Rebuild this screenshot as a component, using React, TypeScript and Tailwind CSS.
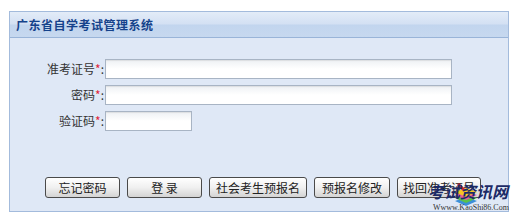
import React from "react";

const font = { fontFamily: '"Noto Sans CJK SC", "Noto Sans", sans-serif' };

function Field({ label, width }: { label: string; width: string }) {
  return (
    <div className="flex items-center h-[20px]">
      <div className="w-[95px] text-right text-[12px] leading-[20px] text-[#333] pr-[1px]">
        {label}
        <span className="text-[#e0263b]">*</span>:
      </div>
      <div
        className={`${width} h-[20px] border border-[#a8b4c4] bg-gradient-to-b from-[#eef1f4] via-white to-white shadow-[inset_0_1px_1px_rgba(0,0,0,0.08)]`}
      />
    </div>
  );
}

function Btn({ label, w }: { label: string; w: string }) {
  return (
    <div
      className={`${w} h-[21px] rounded-[3px] border border-[#4a4a4a] bg-gradient-to-b from-white via-[#f0f0f0] to-[#d4d4d4] text-[12px] leading-[19px] text-[#222] text-center whitespace-nowrap`}
    >
      {label}
    </div>
  );
}

export default function App() {
  return (
    <div className="relative w-[516px] h-[219px] bg-white pt-[11px] pl-[9px]" style={font}>
      <div className="w-[500px] h-[201px] border border-[#a3bbdc] bg-[#dfe8f6] flex flex-col">
        <div className="h-[26px] border-b border-[#99b4d8] bg-[linear-gradient(to_bottom,#e3ecf8_0%,#d3e0f3_48%,#c2d5ee_52%,#c6d8ef_100%)] pl-[6px] flex items-center">
          <span className="text-[12px] font-bold text-[#15428b] tracking-[0.5px]">广东省自学考试管理系统</span>
        </div>
        <div className="flex flex-col gap-[6px] pt-[21px]">
          <Field label="准考证号" width="w-[347px]" />
          <Field label="密码" width="w-[347px]" />
          <Field label="验证码" width="w-[87px]" />
        </div>
        <div className="flex gap-[7px] pl-[35px] mt-[46px]">
          <Btn label="忘记密码" w="w-[75px]" />
          <Btn label="登 录" w="w-[75px]" />
          <Btn label="社会考生预报名" w="w-[98px]" />
          <Btn label="预报名修改" w="w-[76px]" />
          <Btn label="找回准考证号" w="w-[84px]" />
        </div>
      </div>
      <svg className="absolute left-[452px] top-[181px]" width="28" height="28" viewBox="0 0 28 28">
        <path d="M3 20 L14 16 L25 20 L14 25 Z" fill="#3b8fd8" />
        <path d="M3 17 L14 13 L25 17 L14 22 Z" fill="#5cc24a" />
        <path d="M3 14 L14 10 L25 14 L14 19 Z" fill="#e85a9a" />
        <path d="M3 11 L14 7 L25 11 L14 16 Z" fill="#f7c623" />
        <path d="M6 3 L12 9" stroke="#d6262b" strokeWidth="3" />
      </svg>
      <div
        className="absolute left-[428px] top-[182px] whitespace-nowrap text-[16px] leading-[18px] font-bold italic text-[#1c2a66]"
        style={{ fontFamily: '"Noto Sans CJK SC", sans-serif' }}
      >
        考试资讯网
      </div>
      <div
        className="absolute left-[433px] top-[203px] whitespace-nowrap text-[8px] leading-[10px] text-[#333]"
        style={{ fontFamily: '"Liberation Serif", serif' }}
      >
        Wwww.KaoShi86.Com
      </div>
    </div>
  );
}
